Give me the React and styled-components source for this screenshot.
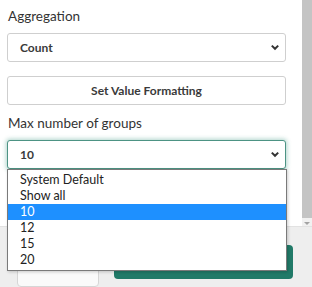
import React from "react";
import styled, { createGlobalStyle } from "styled-components";

const Global = createGlobalStyle`
  html, body { margin: 0; padding: 0; background: #ffffff; }
  body { font-family: "Lato", "Open Sans", sans-serif; color: #333; }
  * { box-sizing: border-box; }
`;

const Page = styled.div`
  width: 312px;
  height: 287px;
  display: flex;
  flex-direction: column;
  overflow: hidden;
  position: relative;
`;

const ScrollArea = styled.div`
  height: 232px;
  display: flex;
  background: #fff;
`;

const Content = styled.div`
  flex: 1;
  padding: 8px 16px 0 7px;
  display: flex;
  flex-direction: column;
  position: relative;
`;

const Scrollbar = styled.div`
  width: 10px;
  display: flex;
  flex-direction: column;
  background: #f1f1f1;
`;

const Thumb = styled.div`
  height: 218px;
  background: #c4c4c4;
`;

const Arrow = styled.div`
  flex: 1;
  display: flex;
  justify-content: center;
  padding-top: 4px;
  &::after {
    content: "";
    border-left: 3px solid transparent;
    border-right: 3px solid transparent;
    border-top: 3px solid #a3a3a3;
    height: 0;
  }
`;

const Label = styled.div`
  font-size: 13.5px;
  line-height: 17px;
  color: #333;
  padding-left: 1px;
  margin-top: ${p => p.$mt || 0}px;
  margin-bottom: 8px;
`;

const Select = styled.div`
  height: 29px;
  border: 1px solid ${p => (p.$focus ? "#4d9384" : "#cfcfcf")};
  border-radius: 3px;
  display: flex;
  align-items: center;
  justify-content: space-between;
  padding: 0 5px 0 12px;
  font-size: 12px;
  font-weight: 700;
  color: #3a3a3a;
  background: #fff;
  box-shadow: ${p => (p.$focus ? "0 0 4px 1px rgba(77,160,140,0.45)" : "none")};
`;

const Button = styled.div`
  height: 29px;
  margin-top: 14px;
  border: 1px solid #cfcfcf;
  border-radius: 3px;
  display: flex;
  align-items: center;
  justify-content: center;
  font-size: 12px;
  font-weight: 700;
  color: #3a3a3a;
  background: #fff;
`;

const Chevron = () => (
  <svg width="10" height="7" viewBox="0 0 10 7">
    <path d="M1.8 1.6 L5 4.8 L8.2 1.6" fill="none" stroke="#333" strokeWidth="2" />
  </svg>
);

const List = styled.ul`
  position: absolute;
  left: 7px;
  top: 169px;
  width: 280px;
  margin: 0;
  padding: 2px 0;
  list-style: none;
  background: #fff;
  border: 1px solid #7a7a7a;
  box-shadow: 1px 1px 3px rgba(0,0,0,0.2);
  z-index: 5;
`;

const Item = styled.li`
  height: 16px;
  line-height: 16px;
  padding-left: 12px;
  font-size: 12.5px;
  color: ${p => (p.$active ? "#fff" : "#222")};
  background: ${p => (p.$active ? "#1e90ff" : "transparent")};
`;

const Footer = styled.div`
  flex: 1;
  background: #eeeeee;
  border-top: 1px solid #e2e2e2;
  display: flex;
  gap: 15px;
  padding: 16px 19px 0 17px;
`;

const Cancel = styled.div`
  width: 82px;
  height: 44px;
  background: #fafafa;
  border: 1px solid #d6d6d6;
  border-radius: 4px;
`;

const Primary = styled.div`
  flex: 1;
  height: 34px;
  margin-top: 2px;
  background: #217a68;
  border-radius: 4px;
`;

export default function App() {
  const options = ["System Default", "Show all", "10", "12", "15", "20"];
  return (
    <Page>
      <Global />
      <ScrollArea>
        <Content>
          <Label>Aggregation</Label>
          <Select>
            <span>Count</span>
            <Chevron />
          </Select>
          <Button>Set Value Formatting</Button>
          <Label $mt={10}>Max number of groups</Label>
          <Select $focus>
            <span>10</span>
            <Chevron />
          </Select>
        </Content>
        <Scrollbar>
          <Thumb />
          <Arrow />
        </Scrollbar>
      </ScrollArea>
      <Footer>
        <Cancel />
        <Primary />
      </Footer>
      <List>
        {options.map(o => (
          <Item key={o} $active={o === "10"}>{o}</Item>
        ))}
      </List>
    </Page>
  );
}
